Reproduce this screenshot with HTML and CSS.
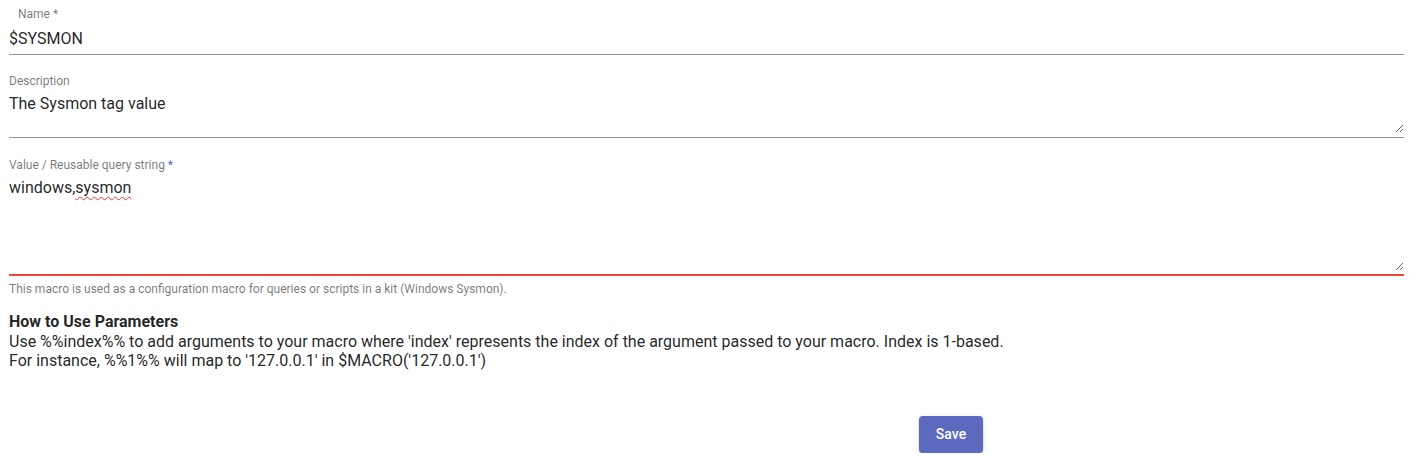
FILE: index.html
```html
<!DOCTYPE html>
<html lang="en">
<head>
    <meta charset="UTF-8">
    <title>Macro</title>
    <link rel="stylesheet" href="styles.css">
</head>
<body>
<form class="form">
    <!--name-->
    <div class="field">
        <label class="label label-name">Name *</label>
        <div class="input-wrap">
            <input class="input" type="text" value="$SYSMON">
        </div>
    </div>
    <!--description-->
    <div class="field field-desc">
        <label class="label">Description</label>
        <div class="input-wrap">
            <textarea class="input area-desc" spellcheck="false">The Sysmon tag value</textarea>
        </div>
    </div>
    <!--value-->
    <div class="field field-value">
        <label class="label">Value / Reusable query string <span class="req">*</span></label>
        <div class="input-wrap error">
            <div class="area-value">
                <span>windows,</span><span class="misspelled">sysmon</span>
            </div>
            <textarea class="input area-value-box" spellcheck="false"></textarea>
        </div>
        <p class="helper">This macro is used as a configuration macro for queries or scripts in a kit (Windows Sysmon).</p>
    </div>
    <!--help-->
    <div class="help">
        <h4>How to Use Parameters</h4>
        <p>Use %%index%% to add arguments to your macro where 'index' represents the index of the argument passed to your macro. Index is 1-based.</p>
        <p>For instance, %%1%% will map to '127.0.0.1' in $MACRO('127.0.0.1')</p>
    </div>
    <div class="actions">
        <button type="button" class="btn">Save</button>
    </div>
</form>
</body>
</html>
```

FILE: styles.css
```css
* {
    margin: 0;
    padding: 0;
    box-sizing: border-box;
}

body {
    font-family: Roboto, "Liberation Sans", sans-serif;
    color: rgba(0, 0, 0, 0.87);
    background: #fff;
}

.form {
    padding: 6px 18px 0 9px;
}

.field {
    display: flex;
    flex-direction: column;
}

.label {
    font-size: 12px;
    line-height: 16px;
    color: rgba(0, 0, 0, 0.54);
}

.label-name {
    padding-left: 9px;
}

.req {
    color: #5c6bc0;
}

.input-wrap {
    position: relative;
    border-bottom: 1px solid rgba(0, 0, 0, 0.42);
}

.input-wrap.error {
    border-bottom: 2px solid #f44336;
}

.input {
    display: block;
    width: 100%;
    border: none;
    outline: none;
    background: transparent;
    font-family: inherit;
    font-size: 16px;
    line-height: 19px;
    color: rgba(0, 0, 0, 0.87);
    padding: 7px 0 6px;
}

textarea.input {
    resize: vertical;
    padding: 0;
}

.field-desc {
    margin-top: 18px;
}

.field-desc .input-wrap {
    padding: 5px 0 4px;
}

.area-desc {
    height: 39px;
}

.field-value {
    margin-top: 19px;
}

.field-value .input-wrap {
    padding: 5px 0 3px;
}

.area-value {
    position: absolute;
    top: 5px;
    left: 0;
    font-size: 16px;
    line-height: 19px;
}

.misspelled {
    text-decoration: underline wavy #e53935;
    text-decoration-thickness: 1px;
    text-underline-offset: 3px;
}

.area-value-box {
    height: 93px;
}

.helper {
    font-size: 12px;
    line-height: 14px;
    margin-top: 6px;
    color: rgba(0, 0, 0, 0.54);
}

.help {
    margin-top: 16px;
    font-size: 16px;
    line-height: 19.5px;
}

.help h4 {
    font-size: 16px;
    font-weight: 700;
}

.actions {
    display: flex;
    justify-content: center;
    padding-left: 489px;
    margin-top: 45px;
}

.btn {
    background: #5c6bc0;
    color: #fff;
    border: none;
    border-radius: 4px;
    font-family: inherit;
    font-size: 14px;
    font-weight: 500;
    width: 64px;
    height: 37px;
    box-shadow: 0 3px 1px -2px rgba(0, 0, 0, 0.2), 0 2px 2px 0 rgba(0, 0, 0, 0.14), 0 1px 5px 0 rgba(0, 0, 0, 0.12);
    cursor: pointer;
}
```
